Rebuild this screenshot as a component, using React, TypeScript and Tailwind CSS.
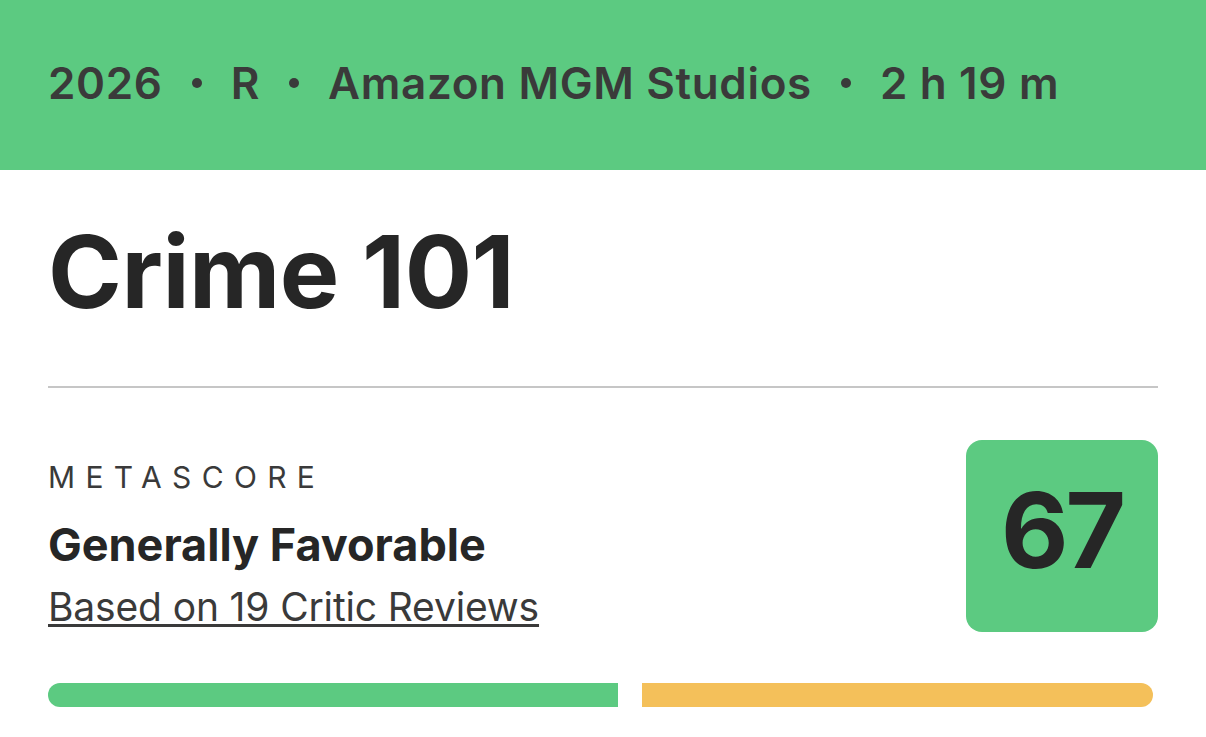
const App = () => {
  const meta = ["2026", "R", "Amazon MGM Studios", "2 h 19 m"];

  return (
    <div className="min-h-[737px] w-[1206px] bg-white font-['Inter',sans-serif] text-[#262626]">
      <header className="flex h-[170px] items-center bg-[#5cca81] px-12 pb-1">
        <div className="flex items-center text-[44px] font-semibold leading-none tracking-[0.015em] text-[#3a3a3a]">
          {meta.map((item, i) => (
            <span key={item} className="flex items-center">
              {i > 0 && (
                <span className="mx-[29px] inline-block h-[10px] w-[10px] rounded-full bg-[#3a3a3a]" />
              )}
              {item}
            </span>
          ))}
        </div>
      </header>

      <main className="px-12">
        <div className="flex h-[216px] items-center pb-3">
          <h1 className="text-[100px] font-bold leading-none tracking-[-0.005em]">
            Crime 101
          </h1>
        </div>
        <div className="h-[2px] bg-[#c6c6c6]" />

        <section className="mt-[52px] flex items-start justify-between">
          <div className="flex flex-col pt-[22px]">
            <span className="text-[30px] leading-none tracking-[0.345em] text-[#3a3a3a]">
              METASCORE
            </span>
            <span className="mt-[30px] text-[45px] font-bold leading-none">
              Generally Favorable
            </span>
            <a
              href="#"
              className="mt-[20px] text-[39px] leading-none tracking-[-0.004em] text-[#3a3a3a] underline decoration-[3px] underline-offset-[3px]"
            >
              Based on 19 Critic Reviews
            </a>
          </div>
          <div className="flex h-[192px] w-[192px] items-center justify-center rounded-2xl bg-[#5cca81] pb-3">
            <span className="text-[104px] font-bold leading-none tracking-[-0.03em]">67</span>
          </div>
        </section>

        <div className="mt-[51px] flex gap-6">
          <div className="h-6 w-[570px] rounded-l-full bg-[#5cca81]" />
          <div className="h-6 w-[511px] rounded-r-full bg-[#f4c05a]" />
        </div>
      </main>
    </div>
  );
};

export default App;
